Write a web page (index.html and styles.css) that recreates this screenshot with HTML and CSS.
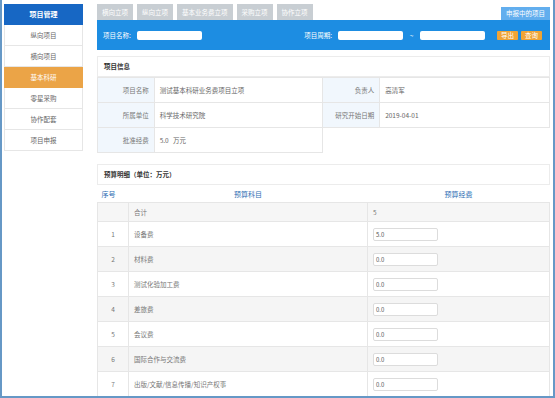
FILE: index.html
```html
<!DOCTYPE html>
<html lang="zh-CN">
<head>
    <meta charset="UTF-8">
    <title>基本科研</title>
    <link rel="stylesheet" href="styles.css">
</head>
<body>
    <div class="frame">
        <div class="sidebar">
            <div class="side-title">项目管理</div>
            <div class="side-item">纵向项目</div>
            <div class="side-item">横向项目</div>
            <div class="side-item active">基本科研</div>
            <div class="side-item">零星采购</div>
            <div class="side-item">协作配套</div>
            <div class="side-item">项目申报</div>
        </div>

        <div class="main">
            <div class="tabs">
                <div class="tab">横向立项</div>
                <div class="tab">纵向立项</div>
                <div class="tab">基本业务费立项</div>
                <div class="tab">采购立项</div>
                <div class="tab">协作立项</div>
                <div class="tab tab-right">申报中的项目</div>
            </div>

            <div class="search-bar">
                <span class="label">项目名称:</span>
                <span class="field"></span>
                <span class="label label-period">项目周期:</span>
                <span class="field"></span>
                <span class="tilde">~</span>
                <span class="field"></span>
                <span class="btn btn-first">导出</span>
                <span class="btn">查询</span>
            </div>

            <div class="panel">
                <div class="panel-title">项目信息</div>
                <table class="info">
                    <tr>
                        <td class="key">项目名称</td>
                        <td class="val">测试基本科研业务费项目立项</td>
                        <td class="key key-r">负责人</td>
                        <td class="val val-r">高清军</td>
                    </tr>
                    <tr>
                        <td class="key">所属单位</td>
                        <td class="val">科学技术研究院</td>
                        <td class="key key-r">研究开始日期</td>
                        <td class="val val-r">2019-04-01</td>
                    </tr>
                    <tr>
                        <td class="key">批准经费</td>
                        <td class="val">5.0 &nbsp;&nbsp;万元</td>
                    </tr>
                </table>
            </div>

            <div class="panel panel-budget">
                <div class="panel-title">预算明细（单位：万元）</div>
                <table class="budget">
                    <tr class="head">
                        <th class="c-no">序号</th>
                        <th class="c-name">预算科目</th>
                        <th class="c-money">预算经费</th>
                    </tr>
                    <tr class="total">
                        <td class="c-no"></td>
                        <td class="c-name">合计</td>
                        <td class="c-money">5</td>
                    </tr>
                    <tr>
                        <td class="c-no">1</td>
                        <td class="c-name">设备费</td>
                        <td class="c-money"><span class="num">5.0</span></td>
                    </tr>
                    <tr class="alt">
                        <td class="c-no">2</td>
                        <td class="c-name">材料费</td>
                        <td class="c-money"><span class="num">0.0</span></td>
                    </tr>
                    <tr>
                        <td class="c-no">3</td>
                        <td class="c-name">测试化验加工费</td>
                        <td class="c-money"><span class="num">0.0</span></td>
                    </tr>
                    <tr class="alt">
                        <td class="c-no">4</td>
                        <td class="c-name">差旅费</td>
                        <td class="c-money"><span class="num">0.0</span></td>
                    </tr>
                    <tr>
                        <td class="c-no">5</td>
                        <td class="c-name">会议费</td>
                        <td class="c-money"><span class="num">0.0</span></td>
                    </tr>
                    <tr class="alt">
                        <td class="c-no">6</td>
                        <td class="c-name">国际合作与交流费</td>
                        <td class="c-money"><span class="num">0.0</span></td>
                    </tr>
                    <tr>
                        <td class="c-no">7</td>
                        <td class="c-name">出版/文献/信息传播/知识产权事</td>
                        <td class="c-money"><span class="num">0.0</span></td>
                    </tr>
                </table>
            </div>
        </div>
    </div>
</body>
</html>
```

FILE: styles.css
```css
body {
    margin: 0;
    background-color: #fff;
    font-family: "Noto Sans CJK SC", "Noto Sans", sans-serif;
    font-size: 6.5px;
    color: #666;
}

.frame {
    width: 555px;
    height: 398px;
    box-sizing: border-box;
    border-left: 2px solid #6698c6;
    border-right: 2px solid #6698c6;
    border-bottom: 2px solid #6698c6;
    padding: 4px 3px 0 2px;
    display: flex;
    gap: 14px;
    overflow: hidden;
}

/* left menu */
.sidebar {
    width: 79px;
    flex-shrink: 0;
    align-self: flex-start;
}

.side-title {
    height: 21px;
    line-height: 21px;
    background-color: #1767c4;
    color: #fff;
    font-size: 7px;
    font-weight: bold;
    text-align: center;
}

.side-item {
    height: 20px;
    line-height: 20px;
    text-align: center;
    border: 1px solid #e6e6e6;
    border-top: none;
    color: #666;
}

.side-item.active {
    background-color: #eba447;
    border-color: #eba447;
    color: #fff;
}

/* main column */
.main {
    width: 453px;
    flex-shrink: 0;
}

.tabs {
    display: flex;
    gap: 4px;
    height: 16px;
    align-items: flex-end;
}

.tab {
    height: 16px;
    line-height: 16px;
    padding: 0 5px;
    background-color: #c8ced3;
    color: #fff;
}

.tab-right {
    margin-left: auto;
    height: 13px;
    line-height: 13px;
    background-color: #62aeee;
}

.search-bar {
    height: 30px;
    background-color: #1d8de2;
    display: flex;
    align-items: center;
    padding: 0 8px 0 6px;
    color: #fff;
}

.label {
    margin-right: 6px;
}

.label-period {
    margin-left: auto;
}

.field {
    width: 65px;
    height: 9px;
    background-color: #fff;
    border-radius: 2px;
}

.tilde {
    width: 17px;
    text-align: center;
}

.btn {
    margin-left: 3px;
    height: 9px;
    line-height: 9px;
    padding: 0 4px;
    background-color: #f0a436;
    border-radius: 1px;
}

.btn-first {
    margin-left: 12px;
}

/* panels */
.panel {
    margin-top: 6px;
}

.panel-budget {
    margin-top: 11px;
}

.panel-title {
    height: 19px;
    line-height: 19px;
    border: 1px solid #ececec;
    padding-left: 6px;
    font-weight: bold;
    color: #333;
}

table {
    border-collapse: collapse;
    width: 453px;
}

.info td {
    height: 24px;
    border: 1px solid #e6e6e6;
    padding: 0;
}

.info .key {
    width: 51px;
    background-color: #f1f7fd;
    text-align: right;
    padding-right: 5px;
    color: #777;
}

.info .val {
    width: 164px;
    padding-left: 5px;
    color: #666;
}

.info .key-r {
    width: 51px;
}

.info .val-r {
    width: 165px;
}

.budget th {
    height: 17px;
    font-weight: normal;
    font-size: 7px;
    color: #2c6db3;
    padding: 0;
}

.budget td {
    height: 24px;
    border: 1px solid #e6e6e6;
    padding: 0;
    color: #777;
}

.budget .total td {
    height: 18px;
    background-color: #f6f6f6;
}

.budget .alt td {
    background-color: #f5f5f5;
}

.budget .c-no {
    width: 27px;
    text-align: center;
}

.budget th.c-no {
    text-align: left;
    padding-left: 4px;
}

.budget .c-name {
    padding-left: 5px;
}

.budget th.c-name {
    text-align: center;
    padding-left: 0;
}

.budget .c-money {
    width: 176px;
    padding-left: 5px;
}

.budget th.c-money {
    padding-left: 0;
    text-align: center;
}

.num {
    display: block;
    width: 61px;
    height: 11px;
    line-height: 11px;
    padding-left: 2px;
    border: 1px solid #dcdcdc;
    border-radius: 2px;
    background-color: #fff;
    font-size: 6px;
    color: #555;
}
```
